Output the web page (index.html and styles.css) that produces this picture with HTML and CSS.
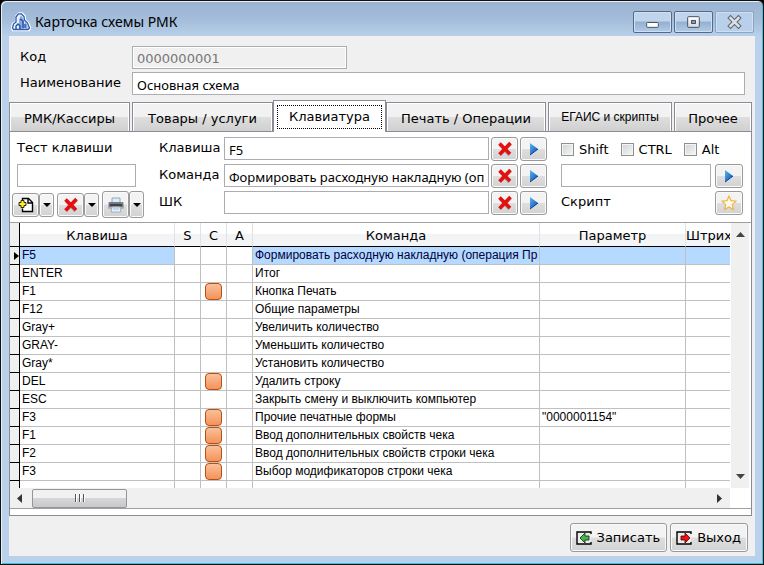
FILE: index.html
```html
<!DOCTYPE html>
<html lang="ru">
<head>
<meta charset="utf-8">
<title>Карточка схемы РМК</title>
<link rel="stylesheet" href="styles.css">
</head>
<body>
<svg class="defs" aria-hidden="true">
  <defs>
    <linearGradient id="blue" x1="0" x2="1" y1="0" y2="1"><stop offset="0" stop-color="#58b4f4"/><stop offset="1" stop-color="#0a48a8"/></linearGradient>
    <linearGradient id="metal" x1="0" x2="0" y1="0" y2="1"><stop offset="0" stop-color="#ffffff"/><stop offset="1" stop-color="#d8d8d8"/></linearGradient>
    <symbol id="cross" viewBox="0 0 16 16"><path d="M3 3.5 12.5 14M13.5 3 3 13.500" fill="none" stroke="#8a8a8a" stroke-width="3.500" opacity=".6"/><path d="M2.500 2.500 13 13M13.500 2 2.500 13.500" fill="none" stroke="#e60f0f" stroke-width="3.600"/></symbol>
    <symbol id="play" viewBox="0 0 16 16"><path d="M4 2v12l8-6z" fill="url(#blue)"/><path d="M4 14 12 8" stroke="#0b3e92" stroke-width="1"/></symbol>
    <symbol id="drop" viewBox="0 0 8 8"><path d="M0 2h8L4 6z"/></symbol>
  </defs>
</svg>
<main class="window">
  <header class="titlebar">
    <svg class="logo" viewBox="0 0 20 20" aria-hidden="true">
      <path d="M5.500 4 8 1.500h3L13.500 4l.5 4 3 3 2 5-1 2H2l-1-2 1-4 3-2z" fill="#fff" stroke="#fff" stroke-width="2.400"/>
      <path d="M5 5 7.500 1.800h3L13 4.500 13.500 8l3 3 2 5-1.500 1.500H2.500L1.500 16l1-4L5 10z" fill="#e9f1ff" stroke="#2e59ad" stroke-width="1.300"/>
      <path d="M10 3 8 8v9h5V8zM13.500 9l3 4v4h-2z" fill="#86a8df"/>
      <path d="M5 17v-3l2-2 2 2v3M9 7l3 2v7M14 12v4" fill="none" stroke="#2451a8" stroke-width="1.400"/>
    </svg>
    <h1>Карточка схемы РМК</h1>
    <div class="window-controls">
      <button type="button" aria-label="Свернуть"><svg viewBox="0 0 38 20"><rect x="13" y="10.500" width="12" height="5" rx="1" fill="#fff" stroke="#454f62"/></svg></button>
      <button type="button" aria-label="Развернуть"><svg viewBox="0 0 38 20"><rect x="13" y="4.500" width="12" height="11" rx="1" fill="url(#metal)" stroke="#454f62"/><rect x="17" y="8.500" width="4" height="3" fill="#7aa1c8" stroke="#454f62"/></svg></button>
      <button type="button" class="inactive" aria-label="Закрыть"><svg viewBox="0 0 38 20"><path d="M15 6l8 8M23 6l-8 8" stroke="#5a6578" stroke-width="4.800" stroke-linecap="square"/><path d="M15 6l8 8M23 6l-8 8" stroke="#dedede" stroke-width="2.800" stroke-linecap="square"/></svg></button>
    </div>
  </header>

  <form class="client">
    <div class="card-fields">
      <label for="code">Код</label>
      <input id="code" class="field code" value="0000000001" disabled>
      <label for="name">Наименование</label>
      <input id="name" class="field ui-text" value="Основная схема">
    </div>

    <div class="tabs" role="tablist">
      <button type="button" role="tab" class="tab">РМК/Кассиры</button>
      <button type="button" role="tab" class="tab joined">Товары / услуги</button>
      <button type="button" role="tab" class="tab active" aria-selected="true"><span>Клавиатура</span></button>
      <button type="button" role="tab" class="tab">Печать / Операции</button>
      <button type="button" role="tab" class="tab compact">ЕГАИС и скрипты</button>
      <button type="button" role="tab" class="tab joined">Прочее</button>
    </div>

    <section class="panel">
      <div class="editor">
        <div class="test">
          <label for="test">Тест клавиши</label>
          <input id="test" class="field">
          <div class="tools">
            <div class="split">
              <button type="button" class="btn" aria-label="Добавить"><svg class="icon" viewBox="0 0 16 16"><path d="M4.500 3.500v-2h6l4 4v9h-10v-3" fill="#fff" stroke="#000" stroke-width="1.400"/><path d="M10 1.500V6h4.500" fill="none" stroke="#000" stroke-width="1.400"/><path d="M3 3.500h3v2h2v3H6v2H3v-2H1v-3h2z" fill="#ffef24" stroke="#2b2b00"/></svg></button>
              <button type="button" class="btn arrow" aria-label="Варианты добавления"><svg><use href="#drop"/></svg></button>
            </div>
            <div class="split">
              <button type="button" class="btn" aria-label="Удалить"><svg class="icon"><use href="#cross"/></svg></button>
              <button type="button" class="btn arrow" aria-label="Варианты удаления"><svg><use href="#drop"/></svg></button>
            </div>
            <div class="split tall">
              <button type="button" class="btn" aria-label="Печать"><svg class="icon" viewBox="0 0 16 16"><path d="M4 1h8v5H4z" fill="#dcecfa" stroke="#98a4b0"/><rect x=".5" y="5" width="15" height="7" rx="1" fill="#747b84"/><path d="M2 7h12v2H2z" fill="#3c424a"/><path d="M1 10h14v2H1z" fill="#a9b0b8"/><path d="M4 10h8l1 5H3z" fill="#e7f3ff" stroke="#a8b0b8"/><path d="M5 12h6" stroke="#8bbbe4"/><path d="M13 6h1" stroke="#5ee064"/></svg></button>
              <button type="button" class="btn arrow" aria-label="Варианты печати"><svg><use href="#drop"/></svg></button>
            </div>
          </div>
        </div>

        <div class="bindings">
          <label for="key">Клавиша</label>
          <input id="key" class="field ui-text" value="F5">
          <button type="button" class="btn" aria-label="Очистить клавишу"><svg class="icon"><use href="#cross"/></svg></button>
          <button type="button" class="btn" aria-label="Выбрать клавишу"><svg class="icon"><use href="#play"/></svg></button>
          <label for="command">Команда</label>
          <input id="command" class="field ui-text" value="Формировать расходную накладную (операция Пр">
          <button type="button" class="btn" aria-label="Очистить команду"><svg class="icon"><use href="#cross"/></svg></button>
          <button type="button" class="btn" aria-label="Выбрать команду"><svg class="icon"><use href="#play"/></svg></button>
          <label for="barcode">ШК</label>
          <input id="barcode" class="field ui-text">
          <button type="button" class="btn" aria-label="Очистить ШК"><svg class="icon"><use href="#cross"/></svg></button>
          <button type="button" class="btn" aria-label="Выбрать ШК"><svg class="icon"><use href="#play"/></svg></button>
        </div>

        <div class="extra">
          <div class="modifiers">
            <label><input type="checkbox">Shift</label>
            <label><input type="checkbox">CTRL</label>
            <label><input type="checkbox">Alt</label>
          </div>
          <input id="param" class="field" aria-label="Параметр">
          <button type="button" class="btn" aria-label="Выбрать параметр"><svg class="icon"><use href="#play"/></svg></button>
          <label for="script">Скрипт</label>
          <button type="button" id="script" class="btn"><svg class="icon" viewBox="0 0 16 16"><path d="M8 1.200l2 4.500 5 .5-3.700 3.400 1 4.900L8 12l-4.300 2.500 1-4.900L1 6.200l5-.5z" fill="#fff8e8" stroke="#eeb445" stroke-width="1.200"/></svg></button>
        </div>
      </div>

      <div class="list">
        <div class="viewport">
          <table>
            <colgroup><col class="c-mark"><col class="c-key"><col class="c-flag"><col class="c-flag"><col class="c-flag"><col><col class="c-param"><col class="c-bar"></colgroup>
            <thead><tr><th></th><th>Клавиша</th><th>S</th><th>C</th><th>A</th><th>Команда</th><th>Параметр</th><th>Штрих</th></tr></thead>
            <tbody>
              <tr class="current"><td><svg class="pointer" viewBox="0 0 5 8"><path d="M0 0v8l5-4z"/></svg></td><td>F5</td><td></td><td></td><td></td><td>Формировать расходную накладную (операция Пр</td><td></td><td></td></tr>
              <tr><td></td><td>ENTER</td><td></td><td></td><td></td><td>Итог</td><td></td><td></td></tr>
              <tr><td></td><td>F1</td><td></td><td><i class="mark"></i></td><td></td><td>Кнопка Печать</td><td></td><td></td></tr>
              <tr><td></td><td>F12</td><td></td><td></td><td></td><td>Общие параметры</td><td></td><td></td></tr>
              <tr><td></td><td>Gray+</td><td></td><td></td><td></td><td>Увеличить количество</td><td></td><td></td></tr>
              <tr><td></td><td>GRAY-</td><td></td><td></td><td></td><td>Уменьшить количество</td><td></td><td></td></tr>
              <tr><td></td><td>Gray*</td><td></td><td></td><td></td><td>Установить количество</td><td></td><td></td></tr>
              <tr><td></td><td>DEL</td><td></td><td><i class="mark"></i></td><td></td><td>Удалить строку</td><td></td><td></td></tr>
              <tr><td></td><td>ESC</td><td></td><td></td><td></td><td>Закрыть смену и выключить компьютер</td><td></td><td></td></tr>
              <tr><td></td><td>F3</td><td></td><td><i class="mark"></i></td><td></td><td>Прочие печатные формы</td><td>"0000001154"</td><td></td></tr>
              <tr><td></td><td>F1</td><td></td><td><i class="mark"></i></td><td></td><td>Ввод дополнительных свойств чека</td><td></td><td></td></tr>
              <tr><td></td><td>F2</td><td></td><td><i class="mark"></i></td><td></td><td>Ввод дополнительных свойств строки чека</td><td></td><td></td></tr>
              <tr><td></td><td>F3</td><td></td><td><i class="mark"></i></td><td></td><td>Выбор модификаторов строки чека</td><td></td><td></td></tr>
              <tr><td></td><td></td><td></td><td></td><td></td><td></td><td></td><td></td></tr>
            </tbody>
          </table>
        </div>
        <div class="vscroll">
          <svg viewBox="0 0 9 5"><path d="M0 5h9L4.500 0z"/></svg>
          <svg viewBox="0 0 9 5"><path d="M0 0h9L4.500 5z"/></svg>
        </div>
        <div class="hscroll">
          <svg viewBox="0 0 5 9"><path d="M5 0v9L0 4.500z"/></svg>
          <div class="thumb"><i></i><i></i><i></i></div>
          <svg viewBox="0 0 5 9"><path d="M0 0v9l5-4.500z"/></svg>
        </div>
      </div>
      <div class="strip"></div>
    </section>

    <footer class="actions">
      <button type="button" class="btn"><svg class="icon" viewBox="0 0 16 16"><path d="M15 4V2H1v12h14v-2" fill="#ececec" stroke="#000" stroke-width="1.400"/><path d="M4 8l5-5v3h4v4H9v3z" fill="#46b34c" stroke="#0a2a0a" stroke-width=".8"/></svg>Записать</button>
      <button type="button" class="btn"><svg class="icon" viewBox="0 0 16 16"><path d="M15 4V2H1v12h14v-2" fill="#ececec" stroke="#000" stroke-width="1.400"/><path d="M14 8L9 3v3H5v4h4v3z" fill="#f01010" stroke="#400" stroke-width=".8"/></svg>Выход</button>
    </footer>
  </form>
</main>
</body>
</html>
```
FILE: styles.css
```css
* { box-sizing: border-box; }

body {
  margin: 0;
  background: #000;
  color: #000;
  font: 13px/16px "DejaVu Sans", Verdana, sans-serif;
}

button, input { font: inherit; color: inherit; margin: 0; }

.defs { position: absolute; width: 0; height: 0; }

.window {
  display: flex;
  flex-direction: column;
  height: 100vh;
  min-height: 420px;
  padding: 0 8px 8px 7px;
  border: 1px solid #111;
  border-radius: 6px 6px 0 0;
  background: linear-gradient(#98b2d0, #a5bedb 20px, #b9d1ea 36px);
  box-shadow: inset 1px 1px #e6f1fc, inset -1px -1px #35c6e4;
}

.titlebar {
  display: flex;
  align-items: center;
  height: 35px;
  padding: 7px 1px 0 3px;
  flex: none;
}

.logo { width: 20px; height: 20px; }

h1 {
  flex: 1;
  margin: 0 0 0 4px;
  font: 14px/20px "Noto Sans", "Open Sans", sans-serif;
}

.window-controls {
  display: flex;
  gap: 2px;
  align-self: flex-start;
  padding-top: 3px;
}

.window-controls button {
  width: 39px;
  height: 22px;
  padding: 0;
  border: 1px solid #56698a;
  border-radius: 2px;
  background: linear-gradient(#c0d5eb 0 45%, #93b0d0 50%, #b2cce8);
  box-shadow: inset 0 0 0 1px #cfe0f2;
}

.window-controls svg { display: block; width: 37px; height: 20px; }
.window-controls .inactive { border-color: #8ba4c6; background: #b8d0ea; }

.client {
  display: flex;
  flex: 1;
  flex-direction: column;
  min-height: 0;
  margin: 0 0 0 1px;
  background: #f0f0f0;
}

.card-fields {
  display: grid;
  grid-template-columns: 112px 1fr;
  row-gap: 3px;
  padding: 10px 10px 5px 11px;
}

.card-fields label { padding-top: 3px; }

.field {
  width: 100%;
  min-width: 0;
  height: 23px;
  padding: 2px 4px 0;
  border: 1px solid #abadb3;
  border-radius: 0;
  background: #fff;
}

.field:disabled { background: #f0f0f0; color: #777; box-shadow: inset 0 0 0 1px #fff; }
.field.code { max-width: 215px; }
.ui-text { font: 13px/16px "Noto Sans", sans-serif; }

.tabs {
  display: grid;
  grid-template-columns: 123fr 141fr 113fr 162fr 126fr 78fr;
  align-items: end;
  margin-right: 3px;
}

.tab {
  height: 29px;
  margin-right: 2px;
  padding: 3px 0 0;
  border: 1px solid #898c95;
  border-bottom: 0;
  border-radius: 0;
  background: linear-gradient(#f2f2f2 0 48%, #dedede 52%, #d0d0d0);
  box-shadow: inset 1px 1px #fff, inset -1px 0 #fff;
  white-space: nowrap;
}

.tab.joined { margin-right: 0; }
.tab.compact { padding-top: 0; font: 12px/16px "Liberation Sans", Arial, sans-serif; }

.tab.active {
  height: 32px;
  margin: 0 0 -1px;
  padding: 3px;
  background: #fff;
  box-shadow: none;
  z-index: 1;
}

.tab.active span {
  display: block;
  height: 24px;
  border: 1px dotted #000;
  line-height: 22px;
}

.panel {
  display: flex;
  flex: 1;
  flex-direction: column;
  min-height: 0;
  margin-right: 3px;
  border: 1px solid #898c95;
  background: #fff;
}

.editor {
  display: flex;
  padding: 5px 8px 4px 2px;
}

.editor label { padding-top: 3px; }

.test {
  display: grid;
  grid-template-rows: 24px 24px 27px;
  row-gap: 3px;
  width: 132px;
}

.test > label { margin-left: 5px; }
.test > .field { width: auto; margin: 0 8px 0 5px; }
.tools { display: flex; align-items: center; gap: 3px; }
.split { display: flex; height: 24px; }
.split.tall { height: 27px; }
.split .btn { width: 27px; height: auto; }
.split .btn.arrow { width: 15px; }
.arrow svg { width: 8px; height: 8px; }

.bindings {
  display: grid;
  flex: 1;
  grid-template-columns: 63px 1fr 27px 27px;
  grid-auto-rows: 24px;
  gap: 3px 2px;
  margin: 0 14px 0 15px;
}

.extra {
  display: grid;
  grid-template-columns: 150px 28px;
  grid-template-rows: 24px 24px 24px;
  gap: 3px 4px;
}

.modifiers { display: flex; grid-column: 1 / -1; gap: 12px; }
.modifiers label { display: flex; gap: 5px; padding-top: 5px; }

.modifiers input {
  width: 13px;
  height: 13px;
  margin-top: 1px;
  appearance: none;
  border: 1px solid #8e8f8f;
  background: linear-gradient(135deg, #cfd2d6, #f6f6f6);
  box-shadow: inset 0 0 0 1px #f4f4f4;
}

.btn {
  display: inline-flex;
  align-items: center;
  justify-content: center;
  height: 24px;
  padding: 0;
  border: 1px solid #9a9a9a;
  border-radius: 3px;
  background: linear-gradient(#f3f3f3 0 48%, #dedede 52%, #d2d2d2);
  box-shadow: inset 0 0 0 1px #fafafa;
}

.icon { flex: none; width: 16px; height: 16px; }

.list {
  display: grid;
  flex: 1;
  grid-template-columns: 1fr 21px;
  grid-template-rows: 1fr 20px;
  min-height: 0;
  border-top: 1px solid #a0a0a0;
  border-bottom: 1px solid #a0a0a0;
}

.viewport { min-height: 0; overflow: hidden; }

table {
  width: 100%;
  table-layout: fixed;
  border-collapse: separate;
  border-spacing: 0;
  font: 12px/17px "Liberation Sans", Arial, sans-serif;
}

.c-mark { width: 10px; }
.c-key { width: 155px; }
.c-flag { width: 26px; }
.c-param { width: 146px; }
.c-bar { width: 44px; }

th {
  height: 24px;
  padding: 2px 0 0;
  overflow: hidden;
  border-right: 1px solid #e0e2e5;
  border-bottom: 1px solid #000;
  background: linear-gradient(#fff 0 45%, #f2f3f5 50%, #f4f5f7);
  font: 13px/16px "DejaVu Sans", Verdana, sans-serif;
  white-space: nowrap;
}

td {
  height: 18px;
  padding: 0 0 0 2px;
  overflow: hidden;
  border-right: 1px solid #c0c0c0;
  border-bottom: 1px solid #c0c0c0;
  white-space: nowrap;
}

th:last-child, td:last-child { border-right: 0; }

th:first-child, td:first-child {
  padding: 0;
  border-right-color: #000;
  border-bottom-color: #000;
  background: #f0f0f0;
}

.current td:nth-child(2), .current td:nth-child(n + 6) { background: #b5d9ff; color: #000040; }

.pointer { display: block; width: 5px; height: 8px; margin-left: 4px; }

.mark {
  display: block;
  width: 17px;
  height: 17px;
  margin-left: 2px;
  border: 1px solid #b5500f;
  border-radius: 4px;
  background: linear-gradient(#f9c09a, #f4935a);
}

.vscroll, .hscroll { display: flex; justify-content: space-between; background: #f0f0f0; }

.vscroll {
  flex-direction: column;
  align-items: center;
  margin: 0 2px 0 1px;
  padding: 9px 0;
}

.vscroll svg { width: 9px; height: 5px; fill: #444; }

.hscroll { align-items: center; padding: 0 8px 0 7px; }
.hscroll svg { width: 5px; height: 9px; fill: #333; }

.thumb {
  display: flex;
  align-items: center;
  justify-content: center;
  gap: 2px;
  width: 95px;
  height: 19px;
  margin: 0 auto 0 10px;
  border: 1px solid #959595;
  border-radius: 2px;
  background: linear-gradient(#f1f1f1 0 45%, #d6d6d9 50%, #c9c9cc);
}

.thumb i { width: 2px; height: 8px; border-left: 1px solid #555; border-right: 1px solid #fff; }

.strip { flex: none; height: 6px; }

.actions {
  display: flex;
  flex: none;
  justify-content: flex-end;
  gap: 3px;
  padding: 7px 7px 4px;
}

.actions .btn { gap: 5px; height: 29px; padding: 1px 6px 0 5px; }
```
